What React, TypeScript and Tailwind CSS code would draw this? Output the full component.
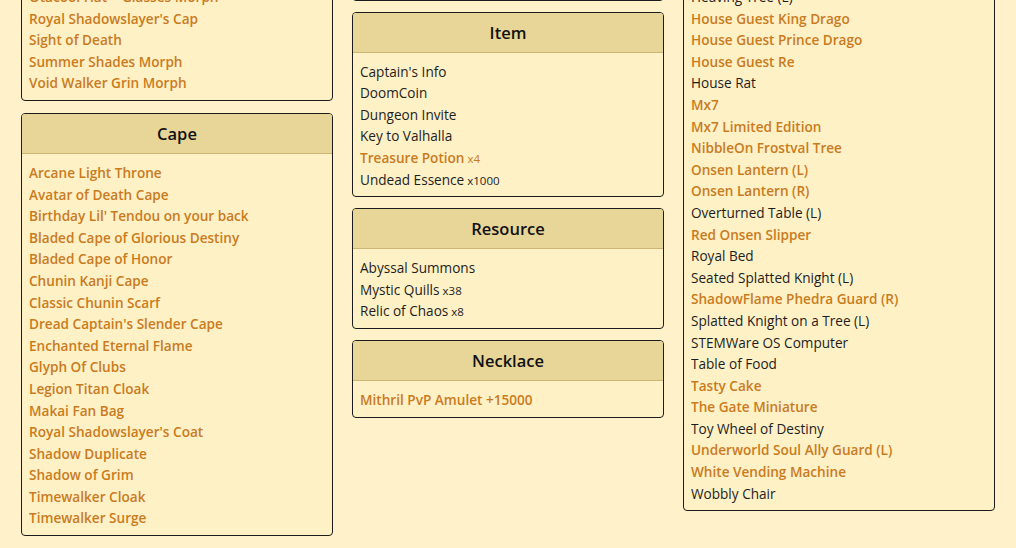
import React from "react";

interface Entry {
  name: string;
  rare?: boolean;
  qty?: string;
}

interface Group {
  title: string;
  items: Entry[];
}

const r = (name: string, qty?: string): Entry => ({ name, rare: true, qty });
const n = (name: string, qty?: string): Entry => ({ name, qty });

// each column starts partway down a list, like the scrolled page
const columns: { offset: string; groups: Group[] }[] = [
  {
    offset: "-mt-[63px] gap-3",
    groups: [
      {
        title: "Helm",
        items: [
          r("Otacool Hat + Glasses Morph"),
          r("Royal Shadowslayer's Cap"),
          r("Sight of Death"),
          r("Summer Shades Morph"),
          r("Void Walker Grin Morph"),
        ],
      },
      {
        title: "Cape",
        items: [
          r("Arcane Light Throne"),
          r("Avatar of Death Cape"),
          r("Birthday Lil' Tendou on your back"),
          r("Bladed Cape of Glorious Destiny"),
          r("Bladed Cape of Honor"),
          r("Chunin Kanji Cape"),
          r("Classic Chunin Scarf"),
          r("Dread Captain's Slender Cape"),
          r("Enchanted Eternal Flame"),
          r("Glyph Of Clubs"),
          r("Legion Titan Cloak"),
          r("Makai Fan Bag"),
          r("Royal Shadowslayer's Coat"),
          r("Shadow Duplicate"),
          r("Shadow of Grim"),
          r("Timewalker Cloak"),
          r("Timewalker Surge"),
        ],
      },
    ],
  },
  {
    offset: "-mt-[77px] gap-[11px]",
    groups: [
      { title: "Pet", items: [r("Void Walker Pet")] },
      {
        title: "Item",
        items: [
          n("Captain's Info"),
          n("DoomCoin"),
          n("Dungeon Invite"),
          n("Key to Valhalla"),
          r("Treasure Potion", "x4"),
          n("Undead Essence", "x1000"),
        ],
      },
      {
        title: "Resource",
        items: [
          n("Abyssal Summons"),
          n("Mystic Quills", "x38"),
          n("Relic of Chaos", "x8"),
        ],
      },
      { title: "Necklace", items: [r("Mithril PvP Amulet +15000")] },
    ],
  },
  {
    offset: "-mt-[63px] gap-3",
    groups: [
      {
        title: "House Item",
        items: [
          n("Heaving Tree (L)"),
          r("House Guest King Drago"),
          r("House Guest Prince Drago"),
          r("House Guest Re"),
          n("House Rat"),
          r("Mx7"),
          r("Mx7 Limited Edition"),
          r("NibbleOn Frostval Tree"),
          r("Onsen Lantern (L)"),
          r("Onsen Lantern (R)"),
          n("Overturned Table (L)"),
          r("Red Onsen Slipper"),
          n("Royal Bed"),
          n("Seated Splatted Knight (L)"),
          r("ShadowFlame Phedra Guard (R)"),
          n("Splatted Knight on a Tree (L)"),
          n("STEMWare OS Computer"),
          n("Table of Food"),
          r("Tasty Cake"),
          r("The Gate Miniature"),
          n("Toy Wheel of Destiny"),
          r("Underworld Soul Ally Guard (L)"),
          r("White Vending Machine"),
          n("Wobbly Chair"),
        ],
      },
    ],
  },
];

const Card: React.FC<{ group: Group }> = ({ group }) => (
  <div className="border border-[#1c1c1c] rounded-[4px] bg-[#fff1c6] overflow-hidden">
    <div className="bg-[#e8d598] border-b border-[#cdb675] text-center py-[6px] text-[16.5px] leading-[27px] font-semibold text-[#111]">
      {group.title}
    </div>
    <ul className="px-[7px] pt-[8px] pb-[6px] text-[13.6px] leading-[21.6px]">
      {group.items.map((item) => (
        <li
          key={item.name}
          className={
            item.rare
              ? "font-semibold text-[#c97b1e] truncate"
              : "text-[#1e1e1e] truncate"
          }
        >
          {item.name}
          {item.qty && (
            <span className="text-[11.5px] leading-none font-normal"> {item.qty}</span>
          )}
        </li>
      ))}
    </ul>
  </div>
);

export default function App() {
  return (
    <div
      className="h-screen overflow-hidden bg-[#fff1c9] px-[21px]"
      style={{ fontFamily: "'Open Sans', 'Noto Sans', sans-serif" }}
    >
      <div className="grid grid-cols-3 gap-[19px] items-start">
        {columns.map((col, i) => (
          <div key={i} className={`flex flex-col ${col.offset}`}>
            {col.groups.map((g) => (
              <Card key={g.title} group={g} />
            ))}
          </div>
        ))}
      </div>
    </div>
  );
}
